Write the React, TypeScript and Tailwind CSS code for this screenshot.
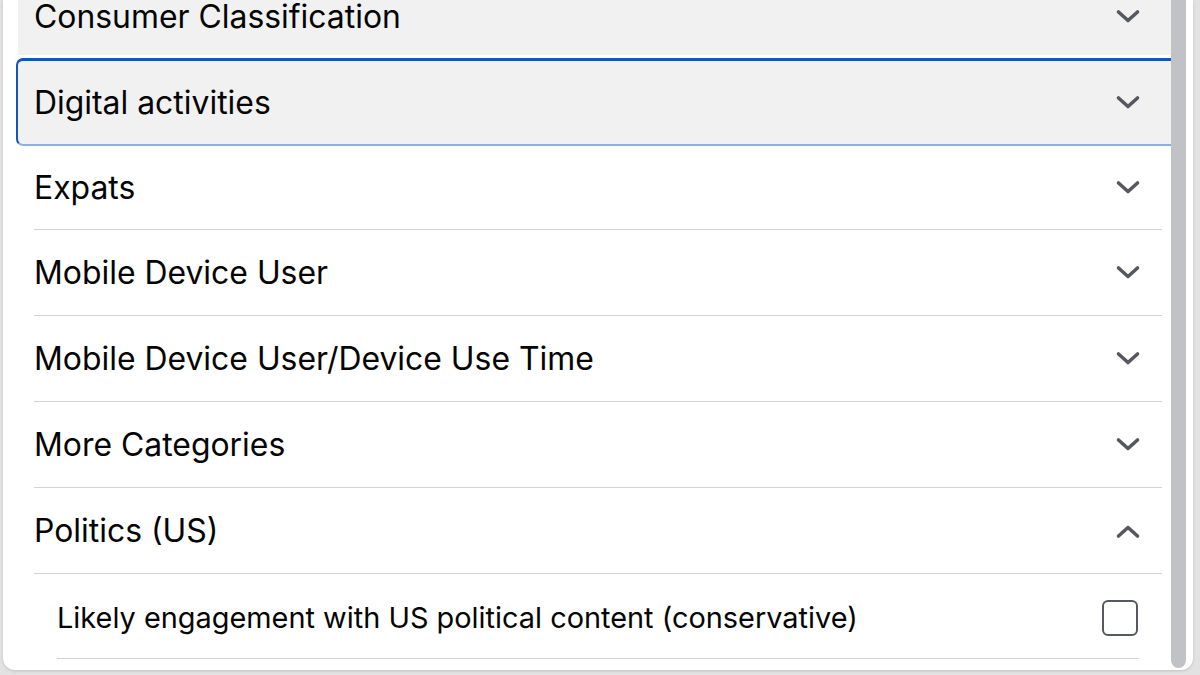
import React from "react";

const Chevron = ({ up = false }: { up?: boolean }) => (
  <svg width="26" height="16" viewBox="0 0 26 16" className="shrink-0">
    <path
      d={up ? "M3.5 13 L13 4.5 L22.5 13" : "M3.5 3 L13 11.5 L22.5 3"}
      fill="none"
      stroke="#55585e"
      strokeWidth="3.6"
      strokeLinecap="round"
      strokeLinejoin="round"
    />
  </svg>
);

const font = { fontFamily: "Inter, 'Liberation Sans', sans-serif" };

const Row = ({ label, up = false }: { label: string; up?: boolean }) => (
  <div>
    <div className="ml-[18px] mr-[9px] h-px bg-[#d3d3d3]" />
    <div className="h-[85px] flex items-center pl-[18px] pr-[30px]">
      <span className="flex-1 text-[31.9px] font-normal text-[#050505]">{label}</span>
      <Chevron up={up} />
    </div>
  </div>
);

export default function App() {
  return (
    <div className="w-[1200px] h-[675px] bg-[#e2e2e2] overflow-hidden" style={font}>
      <div className="ml-[3px] w-[1190px] h-[670px] bg-white rounded-b-[12px] overflow-hidden flex shadow-[0_1px_3px_rgba(0,0,0,0.15)]">
        <div className="flex-1 pl-[13px] overflow-hidden">
          <div className="mt-[-21px]">
            <div className="ml-[2px] h-[76px] bg-[#f1f1f1] flex items-center pl-[16px] pr-[30px]">
              <span className="flex-1 text-[31.9px] font-normal text-[#050505]">Consumer Classification</span>
              <Chevron />
            </div>
            <div className="mt-[3px] h-[88px] bg-[#f1f1f1] border-2 border-t-[3px] border-r-0 border-[#1654bd] border-b-[#8eaee0] rounded-l-[7px] flex items-center pl-[16px] pr-[30px]">
              <span className="flex-1 text-[31.9px] font-normal text-[#050505]">Digital activities</span>
              <Chevron />
            </div>
            <div className="h-[83px] flex items-center pl-[18px] pr-[30px]">
              <span className="flex-1 text-[31.9px] font-normal text-[#050505]">Expats</span>
              <Chevron />
            </div>
            <Row label="Mobile Device User" />
            <Row label="Mobile Device User/Device Use Time" />
            <Row label="More Categories" />
            <Row label="Politics (US)" up />
            <div className="ml-[18px] mr-[9px] h-px bg-[#d3d3d3]" />
            <div className="h-[84px] flex items-center pl-[41px] pr-[33px] pt-[3px]">
              <span className="flex-1 text-[28.9px] font-normal text-[#050505]">
                Likely engagement with US political content (conservative)
              </span>
              <div className="w-[36px] h-[36px] rounded-[6px] border-[2.5px] border-[#55585e]" />
            </div>
            <div className="ml-[41px] mr-[32px] h-px bg-[#d3d3d3]" />
          </div>
        </div>
        <div className="w-[15px] mr-[7px] flex flex-col">
          <div className="flex-1 bg-[#c1c2c6] rounded-b-[8px] mb-[2px]" />
        </div>
      </div>
    </div>
  );
}
